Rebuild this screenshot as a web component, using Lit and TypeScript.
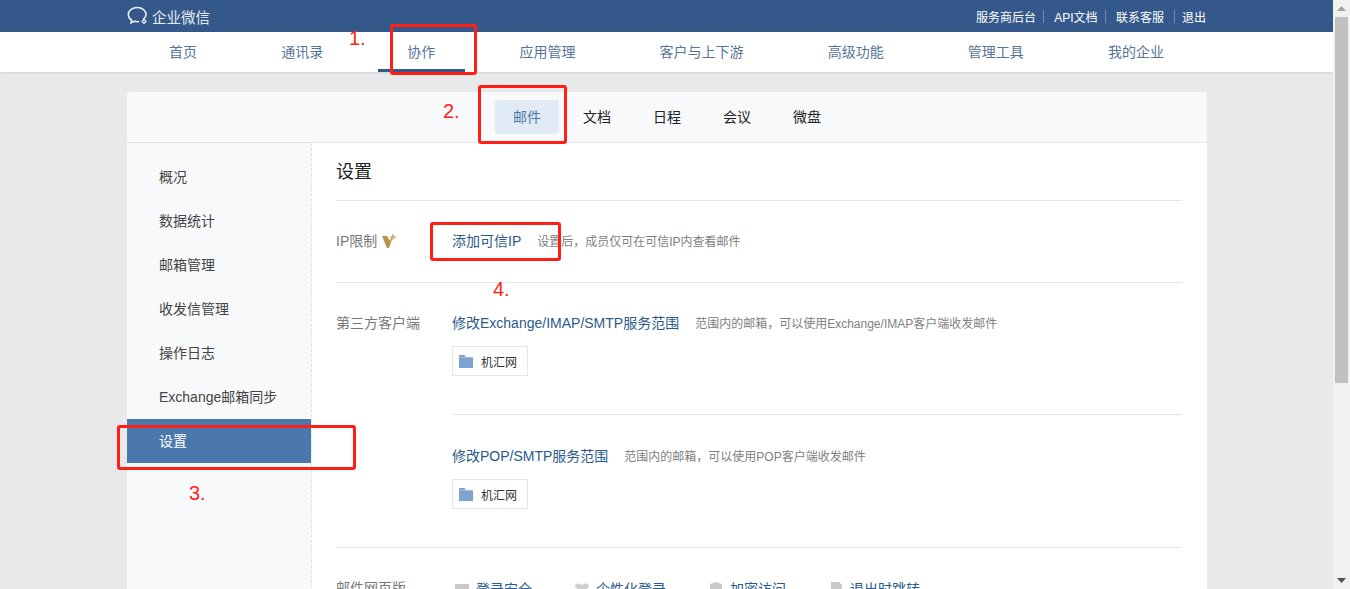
import { LitElement, html, css, svg } from "lit";
import { customElement } from "lit/decorators.js";

const NAV = ["首页", "通讯录", "协作", "应用管理", "客户与上下游", "高级功能", "管理工具", "我的企业"];
const TABS = ["邮件", "文档", "日程", "会议", "微盘"];
const SIDE = ["概况", "数据统计", "邮箱管理", "收发信管理", "操作日志", "Exchange邮箱同步", "设置"];

const folder = html`<svg class="folder" viewBox="0 0 14 13" width="14" height="13"><path d="M0 0h5.500l1.200 2H14v11H0z" fill="#7fa3cf"/><path d="M0 2.600h14" stroke="#fff" stroke-width=".6" opacity=".5"/></svg>`;
const icons = [
  svg`<rect x="0" y="2" width="14" height="10" fill="#c9c9c9"/>`,
  svg`<path d="M0 4c0-2 3-3 5-2l2 1 2-1c2-1 5 0 5 2 0 2-3 3-5 5l-2 2-2-2C3 7 0 6 0 4z" fill="#cfcfcf"/>`,
  svg`<path d="M7 0l6 2v5c0 3-2.500 5-6 6-3.500-1-6-3-6-6V2z" fill="#c9c9c9"/>`,
  svg`<path d="M2 0h8l3 3v10H2z" fill="#c9c9c9"/>`,
];

@customElement("app-root")
export class AppRoot extends LitElement {
  static styles = css`
    :host { display: flex; width: 1350px; height: 589px; overflow: hidden; position: relative; background: #e8e9eb;
      font-family: "Liberation Sans", "Noto Sans CJK SC", sans-serif; font-size: 14px; color: #333; }
    * { box-sizing: border-box; }
    .page { width: 1333px; height: 589px; overflow: hidden; flex: none; }
    .top { height: 32px; background: #34588a; padding: 0 127px 0 127px; display: flex; align-items: center; color: #fff; }
    .logo { display: block; margin-right: 3px; }
    .brand { font-size: 14.5px; color: #e6ecf3; flex: 1; }
    .links { display: flex; align-items: center; font-size: 12px; }
    .sep { width: 1px; height: 13px; background: #6e8fb6; }
    .s1 { margin: 0 10px 0 7px; }
    .s2 { margin: 0 10px 0 7.5px; }
    .s3 { margin: 0 7px 0 10px; }
    .nav { height: 40px; background: #fff; display: flex; gap: 25.15px; padding-left: 139.5px; box-shadow: 0 1px 2px rgba(0,0,0,.1); position: relative; }
    .nav a { padding: 0 29.5px; line-height: 40px; height: 40px; color: #56749a; border-bottom: 3px solid transparent; }
    .nav a.on { border-bottom-color: #34588a; }
    .card { margin: 20px 126px 0 127px; background: #fff; border-radius: 4px 4px 0 0; overflow: hidden; }
    .tabs { height: 51px; background: #f8f9fb; border-bottom: 1px solid #e4e6e9; display: flex; justify-content: center; gap: 6px; padding-top: 8px; }
    .tabs a { width: 64px; height: 34px; line-height: 34px; text-align: center; color: #222; border-radius: 3px; }
    .tabs a.on { background: #e0ebf6; color: #4a78ac; }
    .body { display: flex; }
    .side { width: 185px; flex: none; background: #f8f9fb; border-right: 1px dashed #e0e2e6; padding-top: 12px; min-height: 460px; }
    .side a { display: block; height: 44px; line-height: 44px; padding-left: 32px; color: #444; width: 184px; }
    .side a.on { background: #4a78ac; color: #fff; }
    .main { flex: 1; padding: 0 25px 0 24px; min-width: 0; }
    h1 { margin: 0; height: 58px; font-size: 18px; font-weight: 400; line-height: 58px; border-bottom: 1px solid #e4e6e9; color: #222; }
    .row { display: grid; grid-template-columns: 116px 1fr; border-bottom: 1px solid #e4e6e9; }
    .label { color: #787878; line-height: 20px; display: flex; align-items: center; height: 20px; gap: 4px; }
    .ip { padding: 30px 0 31px; }
    .clients { padding: 30px 0 0; }
    .link { color: #2b5a8a; }
    .line { display: flex; align-items: center; height: 18px; }
    .ip .line { margin-bottom: 2px; }
    .hint { font-size: 12px; color: #808080; margin-left: 16px; }
    .chip { margin-top: 15px; width: 76px; height: 30px; border: 1px solid #e4e6e9; background: #fff; display: flex; align-items: center; padding-left: 6px; gap: 8px; font-size: 12px; color: #333; }
    .folder { display: block; }
    .block { padding-bottom: 38px; }
    .block + .block { border-top: 1px solid #e4e6e9; padding-top: 31px; }
    .last { padding-top: 30px; }
    .last .row2 { display: flex; height: 20px; align-items: center; }
    .opt { display: flex; align-items: center; gap: 7px; color: #2b5a8a; }
    .o0 { width: 123px; padding-left: 3px; }
    .o1 { width: 134px; }
    .o2 { width: 120px; }
    .opt svg { display: block; flex: none; }
    .bar { width: 17px; height: 589px; background: #f1f1f1; flex: none; display: flex; flex-direction: column; align-items: center; }
    .arrow { height: 17px; flex: none; display: flex; align-items: center; justify-content: center; }
    .thumb { width: 13px; height: 366px; background: #c1c1c1; flex: none; }
    .fill { flex: 1; }
    .box { position: absolute; border: 3px solid #ff1f14; border-radius: 3px; pointer-events: none; }
    .b1 { left: 390px; top: 24px; width: 87px; height: 51px; }
    .b2 { left: 478px; top: 85px; width: 89px; height: 59px; }
    .b3 { left: 117px; top: 425px; width: 239px; height: 45px; }
    .b4 { left: 430px; top: 222px; width: 131px; height: 39px; }
    .num { position: absolute; color: #ff1f14; font-size: 20px; line-height: 24px; }
    .n1 { left: 349px; top: 26px; }
    .n2 { left: 443px; top: 99px; }
    .n3 { left: 189px; top: 481px; }
    .n4 { left: 493px; top: 277px; }
  `;

  render() {
    return html`
      <div class="page">
        <div class="top">
          <svg class="logo" width="22" height="20" viewBox="0 0 22 20" fill="none" stroke="#eef2f6" stroke-width="1.500">
            <path d="M15.800 13.500C18 12 19 10.300 19 8.500 19 4.700 15.300 1.500 10.300 1.500S1.300 4.700 1.300 8.500c0 2.300 1.200 4.200 3.300 5.600l-.6 2.700 3.100-1.500c1 .3 2 .4 3.200.4.600 0 1.200 0 1.800-.1"/>
            <path d="M17 13.500l2 2-2 2-2-2z" stroke-width="1.200"/>
          </svg>
          <span class="brand">企业微信</span>
          <div class="links">
            <span>服务商后台</span><i class="sep s1"></i><span>API文档</span><i class="sep s2"></i><span>联系客服</span><i class="sep s3"></i><span>退出</span>
          </div>
        </div>
        <div class="nav">${NAV.map((n) => html`<a class=${n === "协作" ? "on" : ""}>${n}</a>`)}</div>
        <div class="card">
          <div class="tabs">${TABS.map((t, i) => html`<a class=${i === 0 ? "on" : ""}>${t}</a>`)}</div>
          <div class="body">
            <div class="side">${SIDE.map((s) => html`<a class=${s === "设置" ? "on" : ""}>${s}</a>`)}</div>
            <div class="main">
              <h1>设置</h1>
              <div class="row ip">
                <div class="label">IP限制
                  <svg width="16" height="16" viewBox="0 0 16 16"><path d="M1 3h5l3 5 1-3h1.500L8 15H6z" fill="#b8924f"/><path d="M12 0l1 3 3 1-3 1-1 3-1-3-3-1 3-1z" fill="#d0ad6e"/></svg>
                </div>
                <div class="line"><span class="link">添加可信IP</span><span class="hint">设置后，成员仅可在可信IP内查看邮件</span></div>
              </div>
              <div class="row clients">
                <div class="label">第三方客户端</div>
                <div>
                  <div class="block">
                    <div class="line"><span class="link">修改Exchange/IMAP/SMTP服务范围</span><span class="hint">范围内的邮箱，可以使用Exchange/IMAP客户端收发邮件</span></div>
                    <div class="chip">${folder}<span>机汇网</span></div>
                  </div>
                  <div class="block">
                    <div class="line"><span class="link">修改POP/SMTP服务范围</span><span class="hint">范围内的邮箱，可以使用POP客户端收发邮件</span></div>
                    <div class="chip">${folder}<span>机汇网</span></div>
                  </div>
                </div>
              </div>
              <div class="row last">
                <div class="label">邮件网页版</div>
                <div class="row2">
                  ${["登录安全", "个性化登录", "加密访问", "退出时跳转"].map((t, i) => html`<span class="opt o${i}"><svg width="14" height="13" viewBox="0 0 14 13">${icons[i]}</svg>${t}</span>`)}
                </div>
              </div>
            </div>
          </div>
        </div>
      </div>
      <div class="bar">
        <div class="arrow"><svg width="9" height="5" viewBox="0 0 9 5"><path d="M4.500 0L9 5H0z" fill="#a3a3a3"/></svg></div>
        <div class="thumb"></div>
        <div class="fill"></div>
        <div class="arrow"><svg width="9" height="5" viewBox="0 0 9 5"><path d="M0 0h9L4.500 5z" fill="#505050"/></svg></div>
      </div>
      <div class="box b1"></div><div class="box b2"></div><div class="box b3"></div><div class="box b4"></div>
      <span class="num n1">1.</span><span class="num n2">2.</span><span class="num n3">3.</span><span class="num n4">4.</span>
    `;
  }
}
